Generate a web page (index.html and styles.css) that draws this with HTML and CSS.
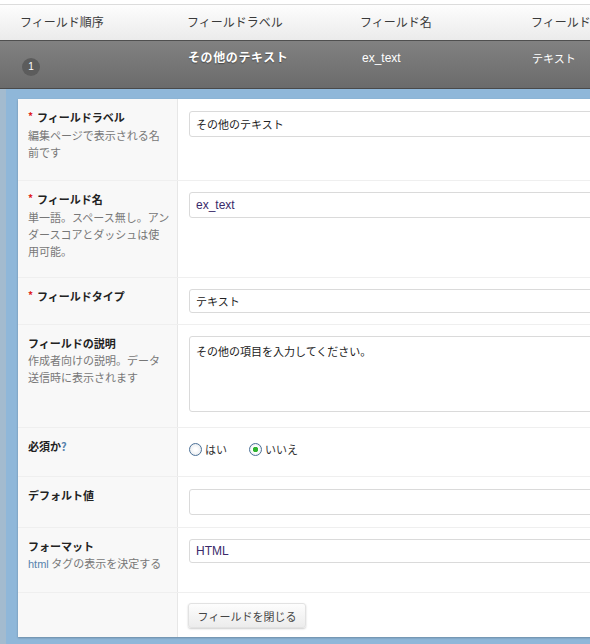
FILE: index.html
```html
<!DOCTYPE html>
<html lang="ja">
<head>
    <meta charset="UTF-8">
    <title>フィールド編集</title>
    <link rel="stylesheet" href="styles.css">
</head>
<body>
    <div class="list-head">
        <div class="col col-order">フィールド順序</div>
        <div class="col col-label">フィールドラベル</div>
        <div class="col col-name">フィールド名</div>
        <div class="col col-type">フィールドタイプ</div>
    </div>

    <div class="field-row">
        <div class="col col-order"><span class="badge">1</span></div>
        <div class="col col-label strong">その他のテキスト</div>
        <div class="col col-name latin">ex_text</div>
        <div class="col col-type">テキスト</div>
    </div>

    <div class="edit-area">
        <div class="panel">
            <div class="row">
                <div class="label">
                    <div class="title"><span class="req">*</span>フィールドラベル</div>
                    <div class="desc">編集ページで表示される名<br>前です</div>
                </div>
                <div class="field first">
                    <input class="text" type="text" value="その他のテキスト">
                </div>
            </div>

            <div class="row">
                <div class="label">
                    <div class="title"><span class="req">*</span>フィールド名</div>
                    <div class="desc">単一語。スペース無し。アン<br>ダースコアとダッシュは使<br>用可能。</div>
                </div>
                <div class="field">
                    <input class="text latin" type="text" value="ex_text">
                </div>
            </div>

            <div class="row">
                <div class="label">
                    <div class="title"><span class="req">*</span>フィールドタイプ</div>
                </div>
                <div class="field">
                    <div class="text select">テキスト</div>
                </div>
            </div>

            <div class="row">
                <div class="label">
                    <div class="title">フィールドの説明</div>
                    <div class="desc">作成者向けの説明。データ<br>送信時に表示されます</div>
                </div>
                <div class="field">
                    <textarea class="text area">その他の項目を入力してください。</textarea>
                </div>
            </div>

            <div class="row">
                <div class="label">
                    <div class="title">必須か<span class="hint">?</span></div>
                </div>
                <div class="field radios">
                    <label class="radio"><input type="radio" name="req">はい</label>
                    <label class="radio"><input type="radio" name="req" checked>いいえ</label>
                </div>
            </div>

            <div class="row">
                <div class="label">
                    <div class="title">デフォルト値</div>
                </div>
                <div class="field first">
                    <input class="text" type="text" value="">
                </div>
            </div>

            <div class="row">
                <div class="label">
                    <div class="title">フォーマット</div>
                    <div class="desc"><span class="hint latin">html</span> タグの表示を決定する</div>
                </div>
                <div class="field">
                    <div class="text select latin">HTML</div>
                </div>
            </div>

            <div class="row">
                <div class="label"></div>
                <div class="field buttons">
                    <button class="btn" type="button">フィールドを閉じる</button>
                </div>
            </div>
        </div>
    </div>
</body>
</html>
```

FILE: styles.css
```css
html, body {
    margin: 0;
    height: 644px;
    overflow: hidden;
    background-color: #fff;
}
body {
    font-family: "Noto Sans CJK JP", "Liberation Sans", sans-serif;
    font-size: 11px;
    color: #333;
}
.latin {
    font-family: "Liberation Sans", "Noto Sans CJK JP", sans-serif;
}

/* list header */
.list-head, .field-row {
    display: flex;
    width: 720px;
}
.list-head {
    margin-top: 4px;
    height: 35px;
    line-height: 33px;
    font-size: 12px;
    color: #3a3a3a;
    border-top: 1px solid #dcdcdc;
    border-bottom: 1px solid #4f4f4f;
    background: linear-gradient(#fdfdfd, #ebebeb);
}
.col {
    flex: none;
    box-sizing: border-box;
    white-space: nowrap;
}
.col-order {
    width: 187px;
    padding-left: 20px;
}
.col-label {
    width: 173px;
}
.col-name {
    width: 171px;
}
.col-type {
    width: 180px;
}

/* collapsed field row */
.field-row {
    height: 47px;
    color: #fff;
    border-bottom: 1px solid #4a4a4a;
    background: linear-gradient(#818181, #6b6b6b);
}
.field-row .col {
    padding-top: 8px;
    line-height: 16px;
}
.field-row .col-order {
    padding-top: 17px;
    padding-left: 22px;
}
.field-row .col-label {
    padding-left: 1px;
}
.field-row .col-name {
    padding-top: 9px;
    padding-left: 2px;
    font-size: 12px;
}
.field-row .col-type {
    padding-top: 9px;
    padding-left: 1px;
}
.strong {
    font-size: 12px;
    font-weight: bold;
    letter-spacing: 0.6px;
    text-shadow: 0 1px 1px rgba(0,0,0,0.4);
}
.badge {
    display: block;
    width: 18px;
    height: 18px;
    border-radius: 50%;
    background-color: #5c5c5c;
    text-align: center;
    line-height: 18px;
    font-size: 10px;
    font-family: "Liberation Sans", sans-serif;
}

/* edit area */
.edit-area {
    height: 556px;
    box-sizing: border-box;
    padding: 10px 0 8px 12px;
    border-left: 6px solid #a3bbcf;
    background-color: #8fb7d9;
}
.panel {
    width: 700px;
    height: 538px;
    background-color: #fff;
    box-shadow: 0 1px 2px rgba(0,0,0,0.25);
    background-image: linear-gradient(to right, #f8f8f8 159px, #e7e7e7 159px, #e7e7e7 160px, #fff 160px);
}
.row {
    display: grid;
    grid-template-columns: 160px 1fr;
    box-sizing: border-box;
    border-top: 1px solid #efefef;
    overflow: hidden;
}
.row:nth-child(1) { height: 81px; border-top: none; }
.row:nth-child(2) { height: 97px; }
.row:nth-child(3) { height: 47px; }
.row:nth-child(4) { height: 103px; }
.row:nth-child(5) { height: 49px; }
.row:nth-child(6) { height: 51px; }
.row:nth-child(7) { height: 65px; }
.row:nth-child(8) { height: 45px; }

.label {
    padding: 10px 4px 0 10px;
}
.title {
    line-height: 16px;
    font-size: 11px;
    font-weight: bold;
    color: #222;
}
.req {
    color: #e02020;
    font-size: 10px;
    margin-right: 4px;
    position: relative;
    top: -2px;
}
.desc {
    margin-top: 1px;
    line-height: 17px;
    color: #777;
}
.hint {
    color: #5783ad;
}
.field {
    padding: 11px 0 0 11px;
}
.field.first {
    padding-top: 12px;
}
.text {
    display: block;
    box-sizing: border-box;
    width: 100%;
    height: 26px;
    margin: 0;
    padding: 0 6px;
    border: 1px solid #dadada;
    border-radius: 3px;
    background-color: #fff;
    font-family: "Noto Sans CJK JP", sans-serif;
    font-size: 11px;
    color: #222;
    line-height: 24px;
    outline: none;
}
.text.latin {
    font-family: "Liberation Sans", sans-serif;
    font-size: 12px;
    color: #3a2a6a;
}
.select {
    height: 24px;
    line-height: 22px;
}
.area {
    height: 76px;
    padding-top: 6px;
    line-height: 16px;
    resize: none;
}
.radios {
    display: flex;
    gap: 22px;
    padding-top: 13px;
    line-height: 16px;
}
.radio {
    display: flex;
    align-items: center;
    gap: 3px;
    height: 16px;
    color: #333;
}
.radio input {
    appearance: none;
    width: 13px;
    height: 13px;
    margin: 0;
    border: 1px solid #4c7197;
    border-radius: 50%;
    background: radial-gradient(circle, #fff 20%, #dfe3e8 100%);
}
.radio input:checked {
    background: radial-gradient(circle, #2fb32f 0, #2fb32f 2.5px, #fff 3px, #dfe3e8 100%);
}
.buttons {
    padding: 10px 0 0 10px;
}
.btn {
    display: block;
    width: 118px;
    height: 25px;
    padding: 0;
    border: 1px solid #e2e2e2;
    border-radius: 3px;
    background: linear-gradient(#fdfdfd, #ececec);
    box-shadow: 0 1px 2px rgba(0,0,0,0.2);
    font-family: "Noto Sans CJK JP", sans-serif;
    font-size: 11px;
    color: #444;
}
```
